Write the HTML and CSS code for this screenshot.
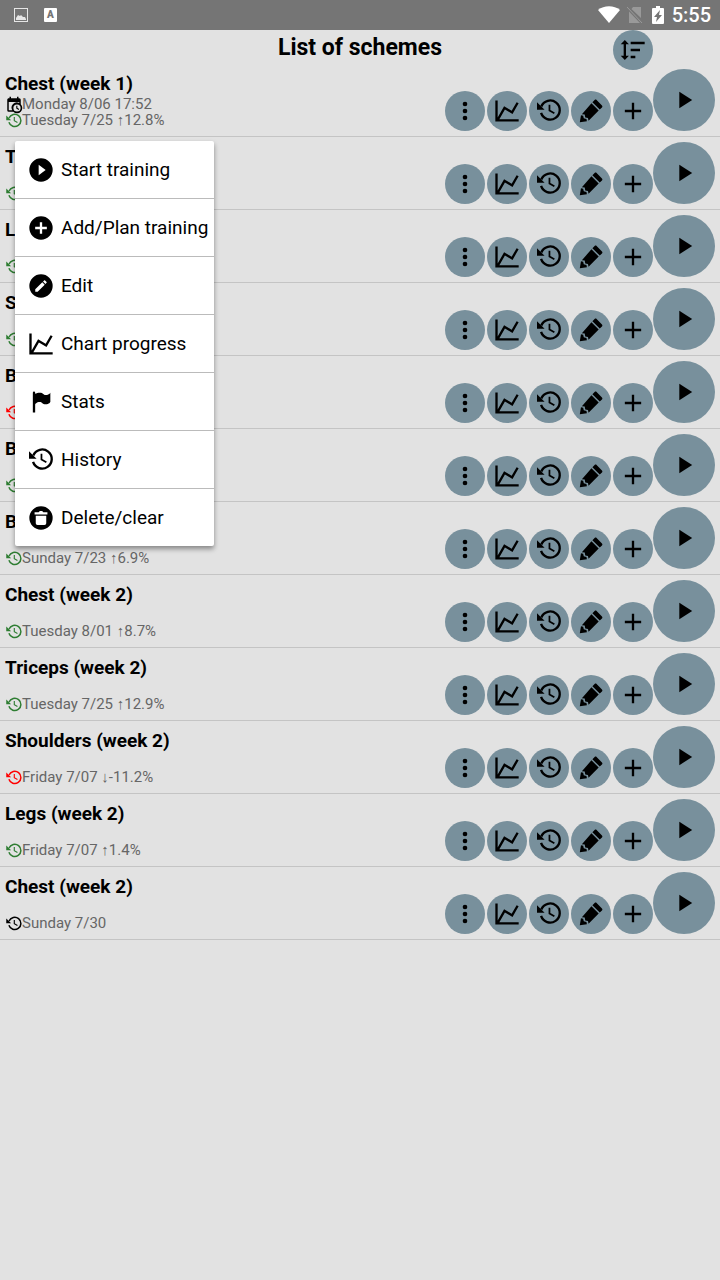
FILE: index.html
```html
<!DOCTYPE html>
<html lang="en">
<head>
    <meta charset="UTF-8">
    <meta name="viewport" content="width=device-width, initial-scale=1.0">
    <title>List of schemes</title>
    <link rel="stylesheet" href="styles.css">
</head>
<body>
    <!-- Icon sprite -->
    <svg class="sprite" aria-hidden="true">
        <symbol id="dots" viewBox="0 0 24 24">
            <circle cx="12" cy="6" r="2"/><circle cx="12" cy="12" r="2"/><circle cx="12" cy="18" r="2"/>
        </symbol>
        <symbol id="chart" viewBox="0 0 24 24">
            <path d="M16 11.78l4.24-7.33 1.73.99-5.23 9.06-6.51-3.75L5.46 19H22v2H2V3h2v14.54L9.5 8z"/>
        </symbol>
        <symbol id="history" viewBox="0 0 24 24">
            <path d="M5.4 8.1A8.2 8.2 0 1 1 5.2 13.7" fill="none" stroke="currentColor" stroke-width="2"/>
            <path d="M1.7 4.6V11H8.2z"/>
            <path d="M12.4 6.6v5l4.2 2.4" fill="none" stroke="currentColor" stroke-width="1.5"/>
        </symbol>
        <symbol id="pencil" viewBox="0 0 24 24">
            <path d="M16.8 2.6l4.6 4.6c.5.5.5 1.2 0 1.7l-1.9 1.9-6.3-6.3 1.9-1.9c.5-.5 1.2-.5 1.7 0zM12.4 5.4l6.2 6.2-8.7 8.7-.5-2.4-2.3-.4-.5-2.4-2.4-.4zM3.400 15.6l1.9.4.5 2.3 2.3.5.4 2L2.400 21.6z"/>
        </symbol>
        <symbol id="plus" viewBox="0 0 24 24">
            <path d="M19 13h-6v6h-2v-6H5v-2h6V5h2v6h6z"/>
        </symbol>
        <symbol id="play" viewBox="0 0 24 24">
            <path d="M8 5v14l11-7z"/>
        </symbol>
        <symbol id="sort" viewBox="0 0 24 24">
            <path d="M10 13v-2h8v2h-8m0 6v-2h4v2h-4m0-12V5h12v2H10M6 17h2.500L5 20.500 1.500 17H4V7H1.500L5 3.500 8.500 7H6z"/>
        </symbol>
        <symbol id="calendar" viewBox="0 0 24 24">
            <path d="M15 13h1.500v2.800l2.400 1.400-.7 1.300L15 16.700V13m4-5H5v11h4.700a7 7 0 0 1 9.300-9.700V8M5 21a2 2 0 0 1-2-2V5c0-1.100.9-2 2-2h1V1h2v2h8V1h2v2h1a2 2 0 0 1 2 2v6.100A7 7 0 0 1 11.100 21H5m11-9.800a4.800 4.800 0 1 0 0 9.600 4.800 4.800 0 0 0 0-9.600z"/>
        </symbol>
        <symbol id="play-circle" viewBox="0 0 24 24">
            <path d="M10 16.500v-9l6 4.500M12 2a10 10 0 1 0 0 20 10 10 0 0 0 0-20z"/>
        </symbol>
        <symbol id="plus-circle" viewBox="0 0 24 24">
            <path d="M17 13h-4v4h-2v-4H7v-2h4V7h2v4h4m-5-9a10 10 0 1 0 0 20 10 10 0 0 0 0-20z"/>
        </symbol>
        <symbol id="pencil-circle" viewBox="0 0 24 24">
            <path d="M12 2a10 10 0 1 0 0 20 10 10 0 0 0 0-20m3.100 5.070c.14 0 .28.05.4.160l1.270 1.270c.23.220.23.570 0 .780l-1 1-2.050-2.050 1-1c.1-.11.240-.16.380-.16m-1.970 1.740l2.060 2.060-6.060 6.060H7.070v-2.060z"/>
        </symbol>
        <symbol id="flag" viewBox="0 0 24 24">
            <path d="M6 3a1 1 0 0 1 1 1v.88C8.060 4.440 9.500 4 11 4c3 0 3 2 5 2 3 0 4-2 4-2v8s-1 2-4 2-3-2-5-2c-3 0-4 2-4 2v7H5V4a1 1 0 0 1 1-1z"/>
        </symbol>
        <symbol id="trash-circle" viewBox="0 0 24 24">
            <path fill-rule="evenodd" d="M12 2a10 10 0 1 0 0 20 10 10 0 0 0 0-20zM6.500 7H10l1-1h2l1 1h3.500v2h-11zM7.500 10h9v6.500a1.500 1.500 0 0 1-1.500 1.500H9a1.500 1.500 0 0 1-1.500-1.500z"/>
        </symbol>
        <symbol id="picture" viewBox="0 0 16 16">
            <path fill-rule="evenodd" d="M1 1h14v14H1zM2 2v12h12V2zM3 13v-2l2-3 2 1 1-1 2 2h2l1 2v1z"/>
        </symbol>
        <symbol id="wifi" viewBox="0 0 22 18">
            <path d="M0 4C6-1 16-1 22 4L11 17z"/>
        </symbol>
        <symbol id="no-sim" viewBox="0 0 16 18">
            <path d="M6 1h8v11L4.500 3zM2 5.500L13 17H2z"/>
            <path d="M0 1l15 16" fill="none" stroke="currentColor"/>
        </symbol>
        <symbol id="battery" viewBox="0 0 12 18">
            <path fill-rule="evenodd" d="M4 0h4v2h3a1 1 0 0 1 1 1v14a1 1 0 0 1-1 1H1a1 1 0 0 1-1-1V3a1 1 0 0 1 1-1h3zM8 4l-6 7h3l-1 5 6-7H7z"/>
        </symbol>
    </svg>

    <div class="status-bar">
        <div class="status-left">
            <svg class="status-picture"><use href="#picture"/></svg>
            <span class="status-letter">A</span>
        </div>
        <div class="status-right">
            <svg class="status-wifi"><use href="#wifi"/></svg>
            <svg class="status-sim"><use href="#no-sim"/></svg>
            <svg class="status-battery"><use href="#battery"/></svg>
            <span class="status-time">5:55</span>
        </div>
    </div>

    <header class="header">
        <h1>List of schemes</h1>
        <button class="round-btn sort-btn" aria-label="Sort"><svg><use href="#sort"/></svg></button>
    </header>

    <main class="content">
        <ul class="scheme-list" id="schemeList"></ul>

        <nav class="menu">
            <button class="menu-item"><svg><use href="#play-circle"/></svg>Start training</button>
            <button class="menu-item"><svg><use href="#plus-circle"/></svg>Add/Plan training</button>
            <button class="menu-item"><svg><use href="#pencil-circle"/></svg>Edit</button>
            <button class="menu-item"><svg><use href="#chart"/></svg>Chart progress</button>
            <button class="menu-item"><svg><use href="#flag"/></svg>Stats</button>
            <button class="menu-item"><svg><use href="#history"/></svg>History</button>
            <button class="menu-item"><svg><use href="#trash-circle"/></svg>Delete/clear</button>
        </nav>
    </main>

    <script src="script.js"></script>
</body>
</html>
```

FILE: styles.css
```css
* {
    margin: 0;
    padding: 0;
    box-sizing: border-box;
}

:root {
    --background: #e2e2e2;
    --button-color: #78909c;
    --line-color: #c4c4c4;
    --text-light: #666666;
    --up: #2e7d32;
    --down: #ff0000;
}

body {
    font-family: Roboto, sans-serif;
    color: #000;
    background-color: var(--background);
}

svg {
    display: block;
    flex-shrink: 0;
    fill: currentColor;
}

button {
    font-family: inherit;
    color: inherit;
    border: none;
    cursor: pointer;
}

.sprite {
    display: none;
}

/* Status bar */
.status-bar {
    display: flex;
    justify-content: space-between;
    align-items: center;
    height: 30px;
    padding: 0 9px 0 13px;
    color: #fff;
    background-color: #757575;
}

.status-left,
.status-right {
    display: flex;
    align-items: center;
}

.status-left {
    gap: 15px;
}

.status-picture {
    width: 16px;
    height: 16px;
    color: #e6e6e6;
}

.status-letter {
    width: 13px;
    height: 14px;
    border-radius: 1px;
    font-size: 10px;
    font-weight: 900;
    line-height: 14px;
    text-align: center;
    color: #757575;
    background-color: #fff;
}

.status-wifi {
    width: 22px;
    height: 18px;
    margin-right: 7px;
}

.status-sim {
    width: 16px;
    height: 18px;
    margin-right: 9px;
    color: #999;
}

.status-battery {
    width: 12px;
    height: 18px;
    margin-right: 8px;
}

.status-time {
    font-size: 20px;
    font-weight: 500;
}

/* Header */
.header {
    display: grid;
    grid-template-columns: 1fr auto 1fr;
    align-items: start;
    height: 34px;
    padding-right: 67px;
    padding-left: 67px;
}

.header h1 {
    grid-column: 2;
    font-size: 23px;
    font-weight: bold;
    line-height: 36px;
}

.sort-btn {
    justify-self: end;
}

/* Round buttons */
.round-btn {
    display: flex;
    justify-content: center;
    align-items: center;
    width: 40px;
    height: 40px;
    border-radius: 50%;
    background-color: var(--button-color);
}

.round-btn svg {
    width: 28px;
    height: 28px;
}

.play-btn {
    width: 62px;
    height: 62px;
}

/* Scheme list */
.content {
    position: relative;
}

.scheme-list {
    list-style: none;
}

.scheme {
    display: flex;
    justify-content: space-between;
    align-items: flex-end;
    padding: 5px;
    border-bottom: 1px solid var(--line-color);
}

.scheme-info {
    display: flex;
    flex-direction: column;
    align-self: stretch;
}

.scheme-info h2 {
    margin-bottom: auto;
    padding-top: 4px;
    font-size: 19px;
    font-weight: bold;
    line-height: 22px;
}

.date {
    display: flex;
    align-items: center;
    font-size: 15px;
    line-height: 16px;
    color: var(--text-light);
}

.date:last-child {
    margin-bottom: 3px;
}

.date svg {
    width: 18px;
    height: 18px;
    margin: 0 -1px -2px 0;
    color: #000;
}

.date.up svg {
    color: var(--up);
}

.date.down svg {
    color: var(--down);
}

.actions {
    display: flex;
    align-items: flex-end;
}

.actions .round-btn + .round-btn:not(.play-btn) {
    margin-left: 2px;
}

/* Popup menu */
.menu {
    position: absolute;
    top: 77px;
    left: 15px;
    border-radius: 2px;
    background-color: #fff;
    box-shadow: 0 3px 5px rgba(0, 0, 0, 0.4);
}

.menu-item {
    display: flex;
    align-items: center;
    gap: 6px;
    width: 100%;
    height: 58px;
    padding: 0 6px 0 12px;
    border-bottom: 1px solid #bbb;
    font-size: 19px;
    background: none;
}

.menu-item:last-child {
    height: 57px;
    border-bottom: none;
}

.menu-item svg {
    width: 28px;
    height: 28px;
}
```

FILE: script.js
```javascript
const schemes = [
    { name: 'Chest (week 1)', planned: 'Monday 8/06 17:52', last: 'Tuesday 7/25 ↑12.8%', trend: 'up' },
    { name: 'T', last: '', trend: 'up' },
    { name: 'L', last: '', trend: 'up' },
    { name: 'S', last: '', trend: 'up' },
    { name: 'B', last: '', trend: 'down' },
    { name: 'B', last: '', trend: 'up' },
    { name: 'B', last: 'Sunday 7/23 ↑6.9%', trend: 'up' },
    { name: 'Chest (week 2)', last: 'Tuesday 8/01 ↑8.7%', trend: 'up' },
    { name: 'Triceps (week 2)', last: 'Tuesday 7/25 ↑12.9%', trend: 'up' },
    { name: 'Shoulders (week 2)', last: 'Friday 7/07 ↓-11.2%', trend: 'down' },
    { name: 'Legs (week 2)', last: 'Friday 7/07 ↑1.4%', trend: 'up' },
    { name: 'Chest (week 2)', last: 'Sunday 7/30', trend: '' }
];

const actions = [
    ['dots', 'More'],
    ['chart', 'Chart progress'],
    ['history', 'History'],
    ['pencil', 'Edit'],
    ['plus', 'Add training'],
    ['play', 'Start training']
];

function icon(name) {
    return `<svg><use href="#${name}"/></svg>`;
}

const buttons = actions.map(([name, label]) =>
    `<button class="round-btn ${name}-btn" aria-label="${label}">${icon(name)}</button>`
).join('');

document.getElementById('schemeList').innerHTML = schemes.map(scheme => `
    <li class="scheme">
        <div class="scheme-info">
            <h2>${scheme.name}</h2>
            ${scheme.planned ? `<p class="date">${icon('calendar')}${scheme.planned}</p>` : ''}
            <p class="date ${scheme.trend}">${icon('history')}${scheme.last}</p>
        </div>
        <div class="actions">${buttons}</div>
    </li>
`).join('');
```
